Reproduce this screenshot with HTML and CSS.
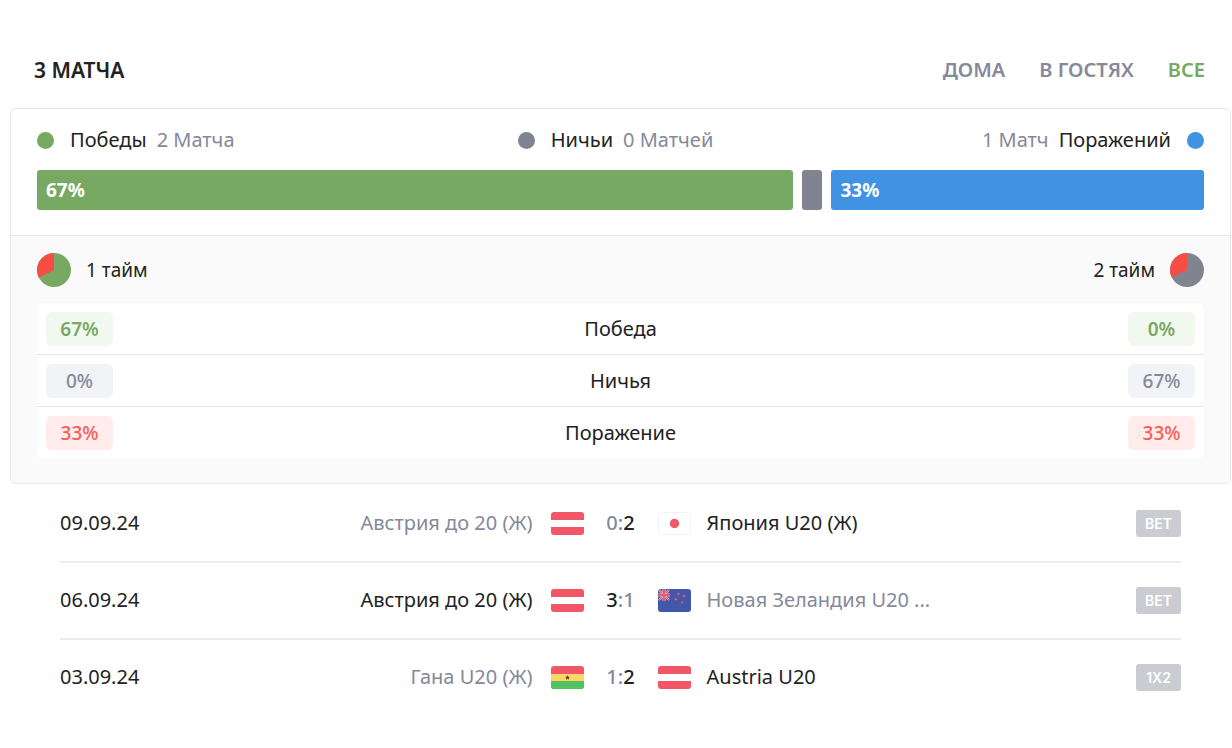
FILE: index.html
```html
<!DOCTYPE html>
<html lang="ru">
<head>
    <meta charset="utf-8">
    <meta name="viewport" content="width=device-width, initial-scale=1">
    <title>3 матча</title>
    <link rel="stylesheet" href="styles.css">
</head>
<body>
    <!-- flags, reused in the match list -->
    <svg class="sprite" aria-hidden="true">
        <symbol id="flag-at" viewBox="0 0 33 23">
            <rect width="33" height="23" rx="3" fill="#f25767"/>
            <rect y="8" width="33" height="7" fill="#fff"/>
        </symbol>
        <symbol id="flag-jp" viewBox="0 0 33 23">
            <rect x="0.5" y="0.5" width="32" height="22" rx="2" fill="#fff" stroke="#f3f3f3"/>
            <circle cx="16.5" cy="11.5" r="4.7" fill="#f25767"/>
        </symbol>
        <symbol id="flag-gh" viewBox="0 0 33 23">
            <rect width="33" height="23" rx="3" fill="#f25767"/>
            <path d="M0 15h33v5a3 3 0 0 1-3 3H3a3 3 0 0 1-3-3z" fill="#52c163"/>
            <rect y="8" width="33" height="7" fill="#fcd567"/>
            <path d="M16.5 9.2l.7 1.5h1.7l-1.2 1.2.5 1.8-1.7-.9-1.7.9.5-1.8-1.2-1.2h1.7z" fill="#444"/>
        </symbol>
        <symbol id="flag-nz" viewBox="0 0 33 23">
            <rect width="33" height="23" rx="3" fill="#4358a9"/>
            <path d="M1 1l10 10M11 1L1 11" stroke="#c9b4d6" stroke-width="2"/>
            <path d="M1 1l10 10M11 1L1 11" stroke="#f25767" stroke-width="1"/>
            <path d="M6 0v12M0 6h12" stroke="#e9b4c6" stroke-width="3"/>
            <path d="M6 0v12M0 6h12" stroke="#f25767" stroke-width="2"/>
            <g fill="#e2566f">
                <circle cx="20.5" cy="5" r="1.3"/>
                <circle cx="26" cy="7" r="1.3"/>
                <circle cx="17.8" cy="10.2" r="1.3"/>
                <circle cx="24.3" cy="13.3" r="1.1"/>
            </g>
        </symbol>
    </svg>

    <header class="header">
        <h1 class="title">3 МАТЧА</h1>
        <nav class="tabs">
            <button type="button" class="tab">ДОМА</button>
            <button type="button" class="tab">В ГОСТЯХ</button>
            <button type="button" class="tab active">ВСЕ</button>
        </nav>
    </header>

    <section class="card">
        <div class="summary">
            <div class="legend">
                <div class="legend-item"><i class="dot green"></i><span class="name">Победы</span><span class="count">2 Матча</span></div>
                <div class="legend-item"><i class="dot grey"></i><span class="name">Ничьи</span><span class="count">0 Матчей</span></div>
                <div class="legend-item"><span class="count">1 Матч</span><span class="name">Поражений</span><i class="dot blue"></i></div>
            </div>
            <div class="bars">
                <div class="bar green" style="flex-grow: 67">67%</div>
                <div class="bar grey"></div>
                <div class="bar blue" style="flex-grow: 33">33%</div>
            </div>
        </div>

        <div class="halves">
            <div class="halves-head">
                <div class="half">
                    <svg class="pie" viewBox="0 0 34 34">
                        <circle cx="17" cy="17" r="17" fill="#78a963"/>
                        <path d="M17 17V0A17 17 0 0 0 1.8 24.6z" fill="#f64d45"/>
                    </svg>
                    <span>1 тайм</span>
                </div>
                <div class="half">
                    <span>2 тайм</span>
                    <svg class="pie" viewBox="0 0 34 34">
                        <circle cx="17" cy="17" r="17" fill="#808491"/>
                        <path d="M17 17V0A17 17 0 0 0 1.8 24.6z" fill="#f64d45"/>
                    </svg>
                </div>
            </div>
            <table class="stats">
                <tr>
                    <td><span class="pill win">67%</span></td>
                    <th scope="row">Победа</th>
                    <td><span class="pill win">0%</span></td>
                </tr>
                <tr>
                    <td><span class="pill draw">0%</span></td>
                    <th scope="row">Ничья</th>
                    <td><span class="pill draw">67%</span></td>
                </tr>
                <tr>
                    <td><span class="pill lose">33%</span></td>
                    <th scope="row">Поражение</th>
                    <td><span class="pill lose">33%</span></td>
                </tr>
            </table>
        </div>
    </section>

    <ul class="matches">
        <li class="match">
            <time class="date">09.09.24</time>
            <span class="team home muted">Австрия до 20 (Ж)</span>
            <div class="result">
                <svg class="flag"><use href="#flag-at"/></svg>
                <span class="score"><span class="muted">0:</span><b>2</b></span>
                <svg class="flag"><use href="#flag-jp"/></svg>
            </div>
            <span class="team">Япония U20 (Ж)</span>
            <button type="button" class="bet">BET</button>
        </li>
        <li class="match">
            <time class="date">06.09.24</time>
            <span class="team home">Австрия до 20 (Ж)</span>
            <div class="result">
                <svg class="flag"><use href="#flag-at"/></svg>
                <span class="score"><b>3</b><span class="muted">:1</span></span>
                <svg class="flag"><use href="#flag-nz"/></svg>
            </div>
            <span class="team muted">Новая Зеландия U20 ...</span>
            <button type="button" class="bet">BET</button>
        </li>
        <li class="match">
            <time class="date">03.09.24</time>
            <span class="team home muted">Гана U20 (Ж)</span>
            <div class="result">
                <svg class="flag"><use href="#flag-gh"/></svg>
                <span class="score"><span class="muted">1:</span><b>2</b></span>
                <svg class="flag"><use href="#flag-at"/></svg>
            </div>
            <span class="team">Austria U20</span>
            <button type="button" class="bet">1X2</button>
        </li>
    </ul>
</body>
</html>
```
FILE: styles.css
```css
:root {
    --fg: #222;
    --muted: #858999;
    --line: #e6e7eb;
    --green: #78a963;
    --grey: #808491;
    --blue: #4192e2;
}

* {
    box-sizing: border-box;
    margin: 0;
    padding: 0;
}

body {
    background: #fff;
    color: var(--fg);
    font: 400 20px/26px "Noto Sans", "Open Sans", sans-serif;
    padding: 56px 1px 0 10px;
}

button {
    border: 0;
    background: none;
    font: inherit;
    cursor: pointer;
}

.sprite {
    display: none;
}

.header {
    display: flex;
    justify-content: space-between;
    align-items: center;
    padding: 0 26px 0 24px;
    height: 28px;
    margin-bottom: 24px;
}

.title {
    font-size: 21px;
    font-weight: 600;
}

.tabs {
    display: flex;
    gap: 34px;
}

.tab {
    color: var(--muted);
    font-weight: 600;
}

.tab.active {
    color: var(--green);
}

.card {
    border: 1px solid var(--line);
    border-radius: 6px;
    overflow: hidden;
}

.summary {
    padding: 18px 26px 25px;
    border-bottom: 1px solid var(--line);
}

.legend {
    display: grid;
    grid-template-columns: 1fr auto 1fr;
    margin-bottom: 17px;
}

.legend-item {
    display: flex;
    align-items: center;
}

.legend-item:last-child {
    justify-content: flex-end;
}

.dot {
    width: 17px;
    height: 17px;
    border-radius: 50%;
}

.name {
    margin-left: 16px;
}

.count {
    margin: 0 10px;
    color: var(--muted);
}

.count + .name {
    margin: 0 16px 0 0;
}

.bars {
    display: flex;
    gap: 9px;
}

.bar {
    flex: 0 0 20px;
    height: 40px;
    border-radius: 3px;
    color: #fff;
    font-size: 19px;
    font-weight: 700;
    line-height: 41px;
    text-indent: 9px;
}

.bar.green, .bar.blue {
    flex-basis: 0;
}

.green {
    background: var(--green);
}

.grey {
    background: var(--grey);
}

.blue {
    background: var(--blue);
}

.halves {
    background: #fafafa;
    padding: 17px 26px 25px;
}

.halves-head {
    display: flex;
    justify-content: space-between;
    margin-bottom: 16px;
}

.half {
    display: flex;
    align-items: center;
    gap: 15px;
    font-size: 19px;
}

.pie {
    width: 34px;
    height: 34px;
}

.stats {
    width: 100%;
    border-spacing: 0;
    background: #fff;
    border-radius: 6px;
}

.stats td, .stats th {
    height: 52px;
    padding: 0 9px;
    border-bottom: 1px solid var(--line);
    font-weight: 400;
    text-align: center;
}

.stats tr:last-child > * {
    height: 51px;
    border-bottom: 0;
}

.stats td {
    width: 85px;
}

.pill {
    display: block;
    border-radius: 6px;
    font-size: 19px;
    font-weight: 500;
    line-height: 34px;
}

.win {
    background: #f1f8f0;
    color: var(--green);
    font-weight: 600;
}

.draw {
    background: #f1f3f6;
    color: var(--muted);
}

.lose {
    background: #ffeceb;
    color: #fa5c55;
}

.matches {
    list-style: none;
    padding: 2px 50px 0;
}

.match {
    display: grid;
    grid-template-columns: 100px 1fr 140px 1fr 100px;
    align-items: center;
    height: 77px;
    padding-bottom: 1px;
    border-bottom: 2px solid #ececef;
}

.match:last-child {
    border-bottom-color: transparent;
}

.team {
    padding-left: 16px;
    white-space: nowrap;
}

.team.home {
    padding: 0 18px 0 0;
    text-align: right;
}

.muted {
    color: var(--muted);
}

.result {
    display: flex;
    justify-content: space-between;
    align-items: center;
}

.score b, .score .muted {
    font-weight: 500;
}

.flag {
    width: 33px;
    height: 23px;
}

.bet {
    justify-self: end;
    width: 45px;
    height: 27px;
    border-radius: 3px;
    background: #cbccd2;
    color: #fff;
    font: 600 14px/27px Inter, sans-serif;
}
```
